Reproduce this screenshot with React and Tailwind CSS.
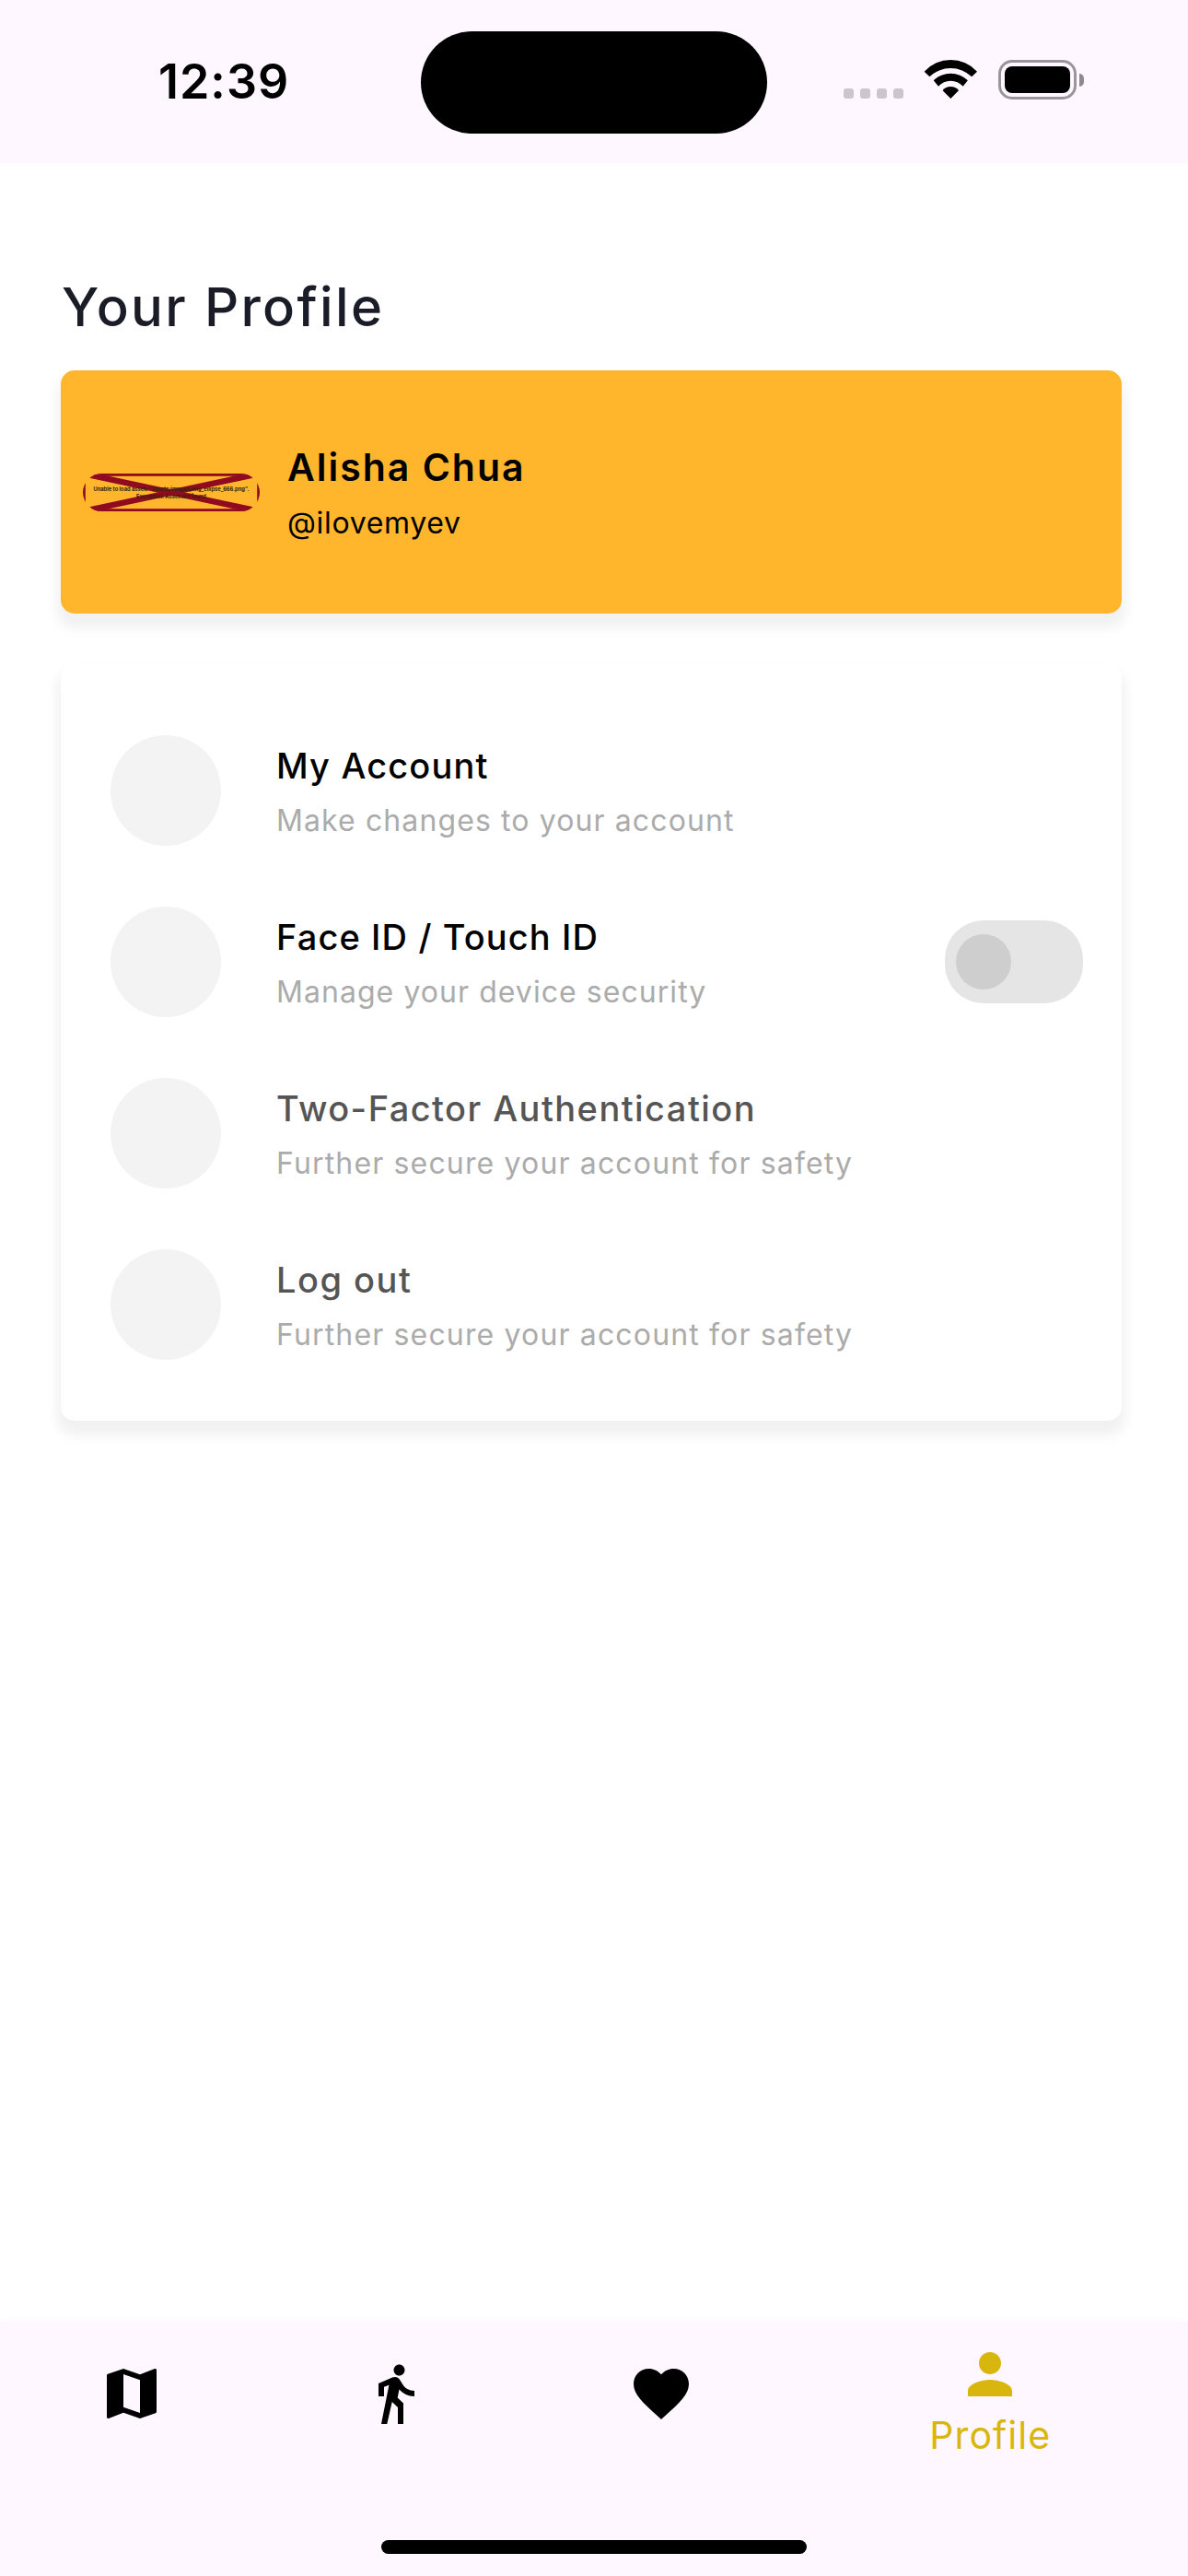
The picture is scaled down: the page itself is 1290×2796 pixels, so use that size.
import { MdDirectionsWalk, MdFavorite, MdMap, MdPerson } from "react-icons/md";

function StatusBar() {
  return (
    <header className="flex h-[177px] items-start bg-[#fef7ff]">
      <div className="w-[457px] shrink-0 pt-[59px] pl-[172px] text-[52px] leading-[60px] font-semibold tracking-[0.99px] text-black">
        12:39
      </div>
      <div className="mt-[33.5px] h-[111px] w-[376px] shrink-0 rounded-full bg-black" />
      <div className="mt-[96px] ml-[83px] flex gap-[7px]">
        {[0, 1, 2, 3].map((dot) => (
          <span key={dot} className="size-[11px] rounded-[3px] bg-[#cbc6cd]" />
        ))}
      </div>
      <svg className="mt-[65px] ml-[22px] h-[42px] w-[58px]" viewBox="0 0 58 42">
        <path d="M0.6 12.7A38.8 38.8 0 0 1 58 12.7L52.2 18.3A32.8 32.8 0 0 0 6.4 18.3Z" />
        <path d="M10.7 22.3A26.6 26.6 0 0 1 47.9 22.3L42.6 28.7A17.7 17.7 0 0 0 16 28.7Z" />
        <path d="M20.6 33.3A10.9 10.9 0 0 1 38 33.3L29.3 42Z" />
      </svg>
      <div className="mt-[65px] ml-[23px] flex items-center">
        <div className="h-[43px] w-[85px] rounded-[15px] border-[3px] border-[#9a959b] p-[4px]">
          <div className="h-full w-full rounded-[8px] bg-black" />
        </div>
        <div className="ml-[3px] h-[14px] w-[5px] rounded-r-full bg-[#8f8a90]" />
      </div>
    </header>
  );
}

function BrokenImage() {
  return (
    <svg className="h-[41px] w-[192px] shrink-0" viewBox="0 0 192 41">
      <defs>
        <clipPath id="pill">
          <rect width="192" height="41" rx="20.5" />
        </clipPath>
      </defs>
      <g clipPath="url(#pill)">
        <g stroke="#900b20" fill="none">
          <rect x="1.4" y="1.4" width="189.2" height="38.2" strokeWidth="2.8" />
          <path d="M0 0L192 41M192 0L0 41" strokeWidth="6.4" />
        </g>
        <g fill="#33260c" fontFamily="Inter, sans-serif" fontSize="5.8" fontWeight="700" textAnchor="middle">
          <text x="96" y="18.9" textLength="169" lengthAdjust="spacingAndGlyphs">
            Unable to load asset: "assets/images/img_ellipse_666.png".
          </text>
          <text x="96" y="26.7" textLength="76" lengthAdjust="spacingAndGlyphs">
            Exception: Asset not found
          </text>
        </g>
      </g>
    </svg>
  );
}

function Toggle() {
  return (
    <div className="ml-auto flex h-[90px] w-[150px] items-center rounded-[42px] bg-[#e5e5e5] pl-3">
      <div className="size-[60px] rounded-full bg-[#cecece]" />
    </div>
  );
}

function SettingRow({ title, titleClass, detail, detailClass, children }) {
  return (
    <div className="flex h-[120px] items-center">
      <div className="size-[120px] shrink-0 rounded-full bg-[#f3f3f3]" />
      <div className="mt-1.5 ml-[60px] whitespace-nowrap">
        <div className={`text-[38px] leading-[60px] font-medium ${titleClass}`}>{title}</div>
        <div className={`text-[32px] leading-[60px] text-[#ababab] ${detailClass}`}>{detail}</div>
      </div>
      {children}
    </div>
  );
}

function NavBar() {
  return (
    <nav className="flex h-[276px] flex-col items-center bg-[#fef7ff] shadow-[0_-2px_8px_rgba(0,0,0,0.02)]">
      <div className="flex h-[237px] w-full text-[72px] text-black">
        <div className="flex flex-2 justify-center pt-[42px]"><MdMap /></div>
        <div className="flex flex-2 justify-center pt-[42px]"><MdDirectionsWalk /></div>
        <div className="flex flex-2 justify-center pt-[42px] pl-[2px]"><MdFavorite /></div>
        <div className="flex flex-3 flex-col items-center pt-[21px] text-[#d9b60d]">
          <MdPerson />
          <span className="text-[41px] leading-[60px] tracking-[1.07px]">Profile</span>
        </div>
      </div>
      <div className="h-[15px] w-[462px] rounded-full bg-black" />
    </nav>
  );
}

export default function App() {
  return (
    <div className="flex h-[2796px] w-[1290px] flex-col overflow-hidden bg-white font-[Inter,sans-serif]">
      <StatusBar />
      <main className="flex flex-1 flex-col pt-[121px] pr-[72px] pl-[66px]">
        <h1 className="pl-px text-[58px] leading-[71px] font-medium tracking-[2.35px] text-[#1a1d28]">
          Your Profile
        </h1>
        <section className="mt-[33px] flex h-[264px] items-center rounded-[15px] bg-[#ffb62d] pl-6 shadow-[0_12px_14px_4px_rgba(0,0,0,0.06)]">
          <BrokenImage />
          <div className="mt-[7px] ml-[30px] text-black">
            <div className="text-[41px] leading-[60px] font-semibold tracking-[1.98px]">Alisha Chua</div>
            <div className="text-[32px] leading-[61px] tracking-[0.67px]">@ilovemyev</div>
          </div>
        </section>
        <section className="mt-[54px] flex h-[822px] flex-col gap-[66px] rounded-[15px] bg-white pt-[78px] pr-[42px] pl-[54px] shadow-[0_12px_14px_4px_rgba(0,0,0,0.06)]">
          <SettingRow
            title="My Account"
            titleClass="tracking-[1.15px] text-black"
            detail="Make changes to your account"
            detailClass="tracking-[1.11px]"
          />
          <SettingRow
            title="Face ID / Touch ID"
            titleClass="tracking-[1.12px] text-black"
            detail="Manage your device security"
            detailClass="tracking-[1.05px]"
          >
            <Toggle />
          </SettingRow>
          <SettingRow
            title="Two-Factor Authentication"
            titleClass="tracking-[1.45px] text-[#555555]"
            detail="Further secure your account for safety"
            detailClass="tracking-[1.15px]"
          />
          <SettingRow
            title="Log out"
            titleClass="tracking-[1.5px] text-[#555555]"
            detail="Further secure your account for safety"
            detailClass="tracking-[1.15px]"
          />
        </section>
      </main>
      <NavBar />
    </div>
  );
}
